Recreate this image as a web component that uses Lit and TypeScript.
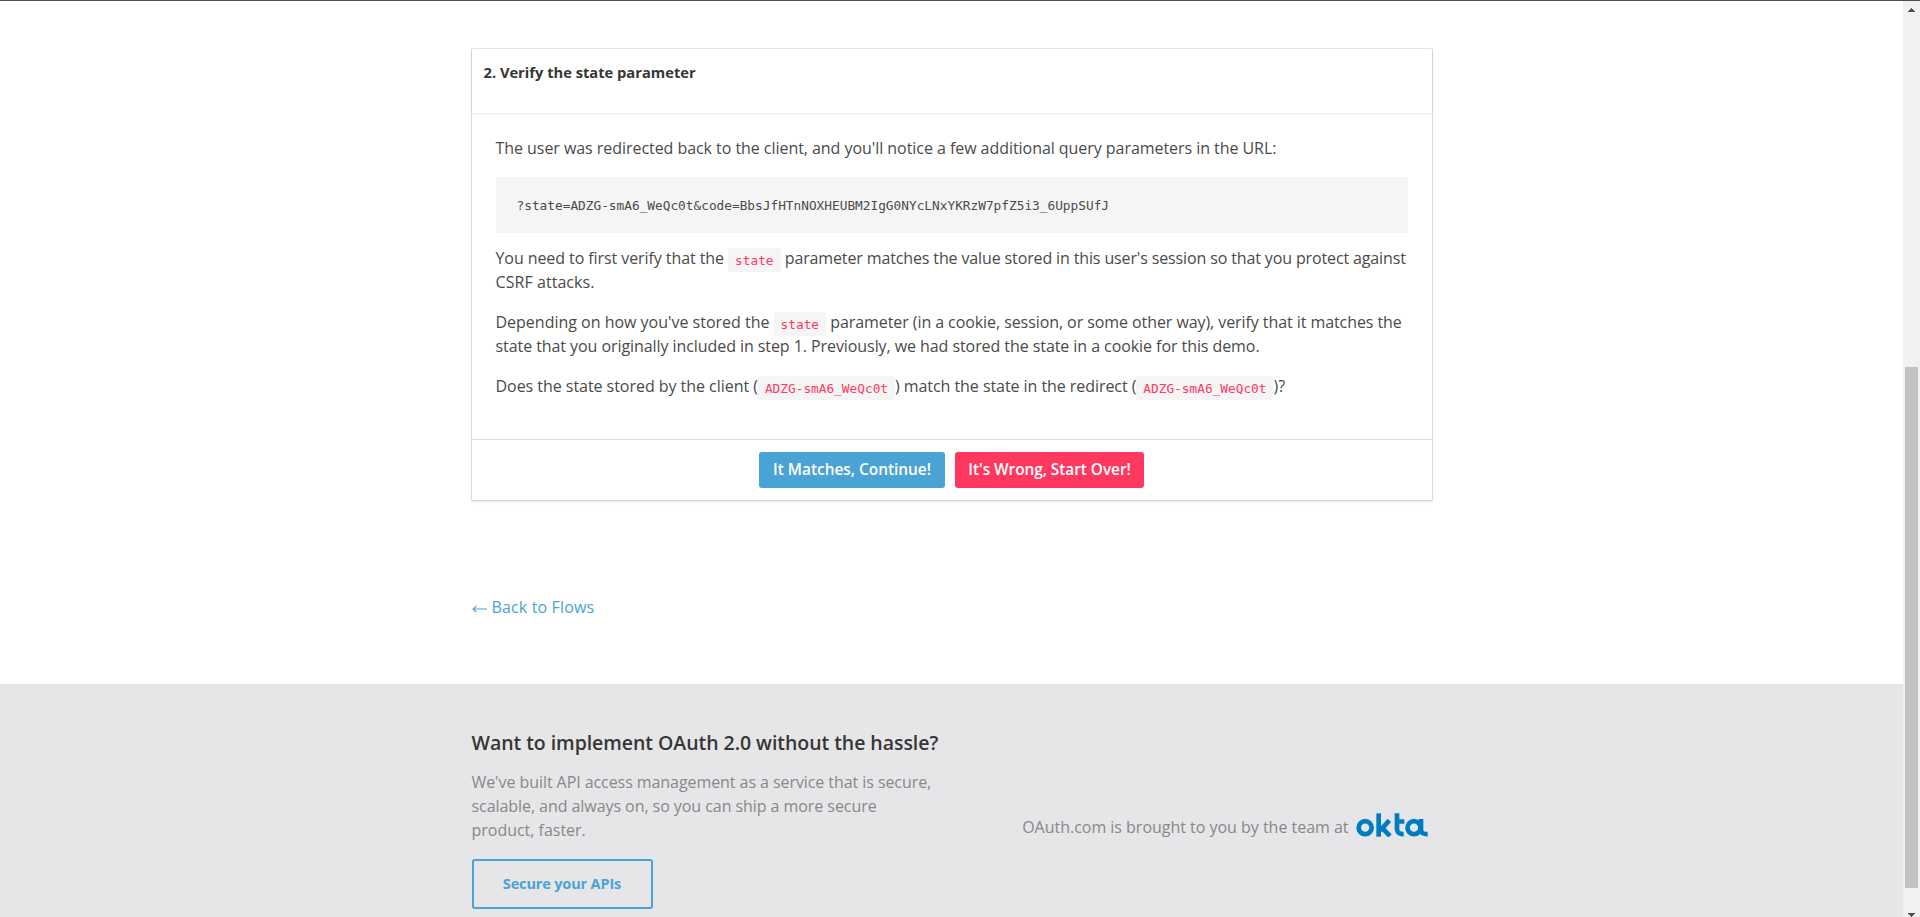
import { LitElement, html, css, svg } from "lit";
import { customElement, property } from "lit/decorators.js";

/** A run of text with its own tracking, in px. */
const run = (text: string, tracking: number) =>
  html`<span style="letter-spacing:${tracking}px">${text}</span>`;

@customElement("okta-logo")
class OktaLogo extends LitElement {
  static styles = css`
    :host { display: block; width: 72px; height: 24px; }
    svg { display: block; }
    .mark { fill: none; stroke: #007dc1; stroke-width: 14; }
  `;
  render() {
    return html`<svg width="72" height="24" viewBox="17 16 216 72">
      ${svg`<g class="mark">
        <circle cx="44.5" cy="60" r="19.5"></circle>
        <path d="M85 17V87"></path>
        <path d="M87 65H93L117 38M94 60L119 85"></path>
        <path d="M140 17V64Q140 80 160 79.500M140 41.500H162"></path>
        <circle cx="191" cy="60" r="19.5"></circle>
        <path d="M212 34V66Q212 80 232 79.500"></path>
      </g>`}
    </svg>`;
  }
}

@customElement("scroll-rail")
class ScrollRail extends LitElement {
  static styles = css`
    :host {
      display: flex; flex-direction: column; align-items: center; flex: none;
      width: 17px; background: #f1f1f1;
    }
    svg { display: block; flex: none; fill: #505050; }
    .track { flex: 1; width: 13px; padding-top: 350px; box-sizing: border-box; }
    .thumb { height: 521px; background: #c1c1c1; }
  `;
  render() {
    return html`
      <svg width="17" height="16" shape-rendering="crispEdges"><path d="M8 7h1v1h1v1h1v1h1v1H5v-1h1V9h1V8h1z"></path></svg>
      <div class="track"><div class="thumb"></div></div>
      <svg width="17" height="17" shape-rendering="crispEdges"><path d="M5 13h7v1h-1v1h-1v1H9v1H8v-1H7v-1H6v-1H5z"></path></svg>
    `;
  }
}

@customElement("app-root")
class AppRoot extends LitElement {
  @property() token = "ADZG-smA6_WeQc0t";

  static styles = css`
    :host {
      display: flex; flex-direction: column; height: 917px; overflow: hidden;
      box-sizing: border-box; border-top: 1px solid #505052; background: #fff;
      font: 16px/24px "Open Sans", "Noto Sans", sans-serif; color: #4a4a4a;
    }
    .frame { display: flex; flex: 1; min-height: 0; }
    .page { flex: 1; min-width: 0; overflow: hidden; background: #fff; }
    .container { width: 960px; margin: 0 auto; }
    .upper { height: 683px; box-sizing: border-box; padding-top: 48px; }
    .card { box-shadow: 0 2px 3px rgba(10,10,10,.1), 0 0 0 1px rgba(10,10,10,.1); }
    .card-header {
      height: 64px; box-sizing: border-box; padding: 11px 12px;
      box-shadow: 0 1px 2px rgba(10,10,10,.1);
      color: #363636; font-weight: 700; font-size: 14.7px;
    }
    .card-content { padding: 23px 24px; height: 326px; box-sizing: border-box; }
    p { margin: 0; white-space: nowrap; }
    .card-content p + p { margin-top: 16px; }
    .mono { font-family: "DejaVu Sans Mono", monospace; font-size: 12.79px; }
    pre {
      margin: 17px 0 13px; padding: 17.500px 21px; height: 56px;
      box-sizing: border-box; line-height: 21px; background: #f5f5f5;
    }
    code { padding: 4.500px 7px; background: #f5f5f5; color: #ff3860; line-height: 1; }
    .card-footer {
      display: flex; justify-content: center; gap: 10px; padding: 12px;
      border-top: 1px solid #dbdbdb;
    }
    .button {
      display: flex; align-items: center; justify-content: center;
      box-sizing: border-box; height: 36px; width: 186px; border-radius: 3px;
      background: #4aa3d5; color: #fff; font-weight: 600; font-size: 15.4px; white-space: nowrap;
      padding-bottom: 1px;
    }
    .button.danger { width: 189px; background: #ff3860; }
    .back {
      display: flex; align-items: center; gap: 5px; margin-top: 95px; color: #4aa3d5;
    }
    .back svg { fill: none; stroke: #4aa3d5; stroke-width: 1.1; margin-top: 3px; }
    .lower { background: #e6e6e8; height: 240px; padding-top: 45px; color: #888; }
    .columns { display: flex; justify-content: space-between; align-items: flex-start; }
    h2 { margin: 0 0 13px; font-size: 19.500px; line-height: 28px; font-weight: 600; color: #363636; white-space: nowrap; }
    .outline {
      display: flex; align-items: center; justify-content: center;
      width: 181px; height: 50px; box-sizing: border-box; margin-top: 17px;
      border: 2px solid #4aa3d5; border-radius: 3px;
      color: #4aa3d5; font-size: 14.500px; font-weight: 700;
    }
    .sponsor { display: flex; align-items: flex-start; gap: 7px; padding: 84px 4px 0 0; }
    .sponsor p { padding-top: 2px; }
  `;

  render() {
    const { token } = this;
    return html`
      <div class="frame">
        <div class="page">
          <div class="upper">
            <div class="container">
              <div class="card">
                <div class="card-header">${run("2. Verify the state parameter", 0)}</div>
                <div class="card-content">
                  <p>${run("The user was redirected back to the client, and you'll notice a few additional query parameters in the URL:", -0.05)}</p>
                  <pre class="mono">?state=${token}&amp;code=BbsJfHTnNOXHEUBM2IgG0NYcLNxYKRzW7pfZ5i3_6UppSUfJ</pre>
                  <p>${run("You need to first verify that the", -0.08)} <code class="mono">state</code> ${run("parameter matches the value stored in this user's session so that you protect against", -0.13)}<br>${run("CSRF attacks.", 0.06)}</p>
                  <p>${run("Depending on how you've stored the", -0.01)} <code class="mono">state</code> ${run("parameter (in a cookie, session, or some other way), verify that it matches the", -0.075)}<br>${run("state that you originally included in step 1. Previously, we had stored the state in a cookie for this demo.", -0.07)}</p>
                  <p>${run("Does the state stored by the client (", -0.04)}<code class="mono">${token}</code>${run(") match the state in the redirect (", -0.06)}<code class="mono">${token}</code>)?</p>
                </div>
                <div class="card-footer">
                  <a class="button">${run("It Matches, Continue!", 0)}</a>
                  <a class="button danger">${run("It's Wrong, Start Over!", -0.04)}</a>
                </div>
              </div>
              <a class="back">
                <svg width="15" height="8" viewBox="0 0 15 8"><path d="M15 4H1M4.500 1L1 4L4.500 7"></path></svg>
                ${run("Back to Flows", 0.14)}
              </a>
            </div>
          </div>
          <div class="lower">
            <div class="container columns">
              <div>
                <h2>${run("Want to implement OAuth 2.0 without the hassle?", -0.05)}</h2>
                <p>${run("We've built API access management as a service that is secure,", -0.07)}<br>${run("scalable, and always on, so you can ship a more secure", -0.06)}<br>${run("product, faster.", -0.02)}</p>
                <a class="outline">${run("Secure your APIs", -0.15)}</a>
              </div>
              <div class="sponsor">
                <p>${run("OAuth.com is brought to you by the team at", -0.02)}</p>
                <okta-logo></okta-logo>
              </div>
            </div>
          </div>
        </div>
        <scroll-rail></scroll-rail>
      </div>
    `;
  }
}
